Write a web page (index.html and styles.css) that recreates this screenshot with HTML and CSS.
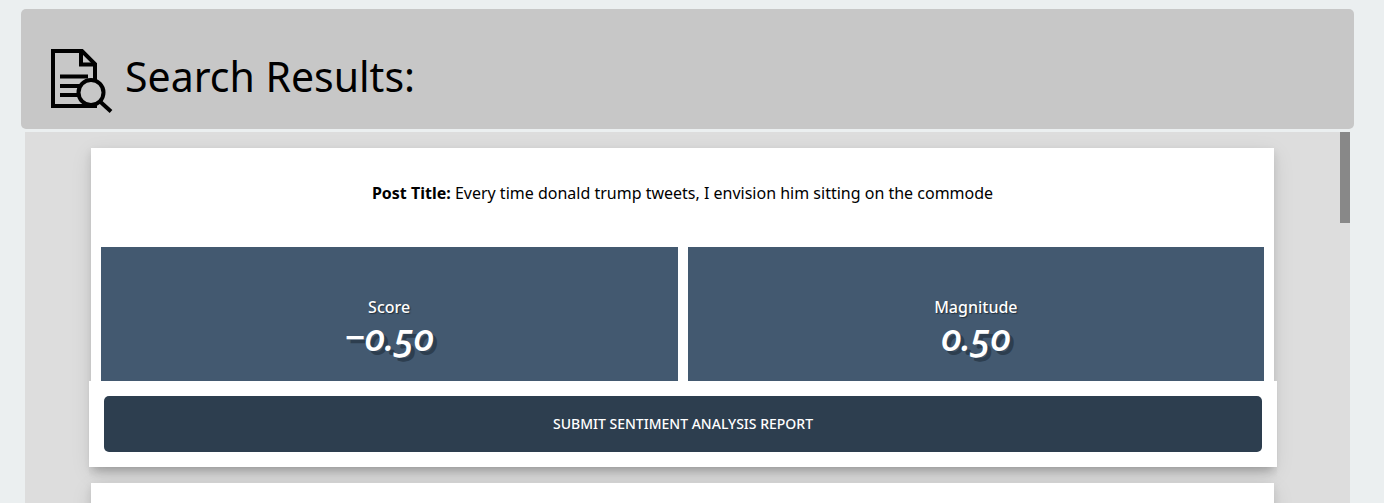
FILE: index.html
```
<!DOCTYPE html>
<html lang="en">
<head>
<meta charset="utf-8">
<meta name="viewport" content="width=device-width, initial-scale=1">
<title>Search Results</title>
<link rel="stylesheet" href="styles.css">
</head>
<body>
<main class="page">
  <header class="results-header">
    <svg class="header-icon" viewBox="0 0 62 64" fill="none" stroke="#000" stroke-width="4" aria-hidden="true">
      <path d="M46 57H2V2H31L44 15v17"/>
      <path d="M30 2v13.500h15"/>
      <path d="M9 27.500h28M9 37h20M9 46h18"/>
      <circle cx="40" cy="43.500" r="12.500" fill="#c7c7c7"/>
      <path d="M49 52.500L60 62.500"/>
    </svg>
    <h1 class="title">Search Results:</h1>
  </header>
  <section class="results">
    <div class="list">
      <article class="card">
        <p class="post"><strong>Post Title:</strong> Every time donald trump tweets, I envision him sitting on the commode</p>
        <div class="metrics">
          <div class="metric"><span class="label">Score</span><span class="value">−0.50</span></div>
          <div class="metric"><span class="label">Magnitude</span><span class="value">0.50</span></div>
        </div>
        <div class="actions"><button class="submit" type="button">SUBMIT SENTIMENT ANALYSIS REPORT</button></div>
      </article>
      <article class="card next"></article>
    </div>
    <div class="track"><div class="thumb"></div></div>
  </section>
</main>
</body>
</html>
```
FILE: styles.css
```
* { box-sizing: border-box; }
body {
  margin: 0;
  background: #ebeff0;
  color: #000;
  font: 16px/24px "Noto Sans", sans-serif;
}
.page {
  display: flex;
  flex-direction: column;
  height: 100vh;
  overflow: hidden;
  padding: 9px 30px 0 21px;
}
.results-header {
  display: flex;
  flex: none;
  align-items: flex-start;
  gap: 12px;
  padding: 40px 30px 16px;
  border-radius: 5px;
  background: #c7c7c7;
}
.header-icon { width: 62px; height: 64px; }
.title { margin: 0; font-size: 41px; line-height: 54px; font-weight: 400; }
.results {
  display: flex;
  flex: 1;
  min-height: 0;
  margin: 3px 4px 0;
  background: #ddd;
}
.list { flex: 1; overflow: hidden; padding-top: 16px; }
.card {
  width: 90%;
  margin: 0 auto 16px;
  background: #fff;
  box-shadow: 0 4px 8px rgba(0, 0, 0, .1), 0 6px 20px rgba(0, 0, 0, .1);
}
.post { margin: 0; padding: 33px 10px 42px; text-align: center; }
.metrics { display: grid; grid-template-columns: 1fr 1fr; gap: 10px; padding: 0 10px; }
.metric {
  display: flex;
  flex-direction: column;
  align-items: center;
  padding: 48px 10px 26px;
  background: #435970;
  color: #fff;
}
.label { font-weight: 500; text-shadow: 1px 1px 1px #222f3b; }
.value {
  font: italic 600 37px/36px "Open Sans", sans-serif;
  font-variant-numeric: oldstyle-nums;
  text-shadow: 4px 4px 0 #2d3e4f;
}
.actions {
  margin: 0 -3px 0 -2px;
  padding: 15px;
  background: #fff;
  box-shadow: 0 6px 12px -4px rgba(0, 0, 0, .2);
  clip-path: inset(0 0 -24px 0);
}
.submit {
  width: 100%;
  height: 56px;
  border: 0;
  border-radius: 5px;
  background: #2d3e4f;
  color: #fff;
  font: 500 14px/20px "Noto Sans", sans-serif;
}
.next { min-height: 335px; }
.track { width: 10px; }
.thumb { height: 91px; background: #888; }
```
